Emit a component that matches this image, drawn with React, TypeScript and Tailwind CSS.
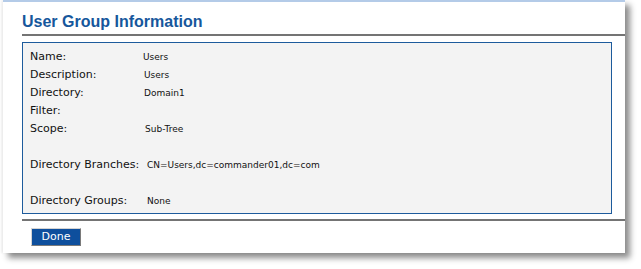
const rows: { label: string; value: string; mt: string; vx: string }[] = [
  { label: 'Name:', value: 'Users', mt: 'mt-0', vx: 'pl-0' },
  { label: 'Description:', value: 'Users', mt: 'mt-0', vx: 'pl-[1px]' },
  { label: 'Directory:', value: 'Domain1', mt: 'mt-0', vx: 'pl-[1px]' },
  { label: 'Filter:', value: '', mt: 'mt-0', vx: 'pl-0' },
  { label: 'Scope:', value: 'Sub-Tree', mt: 'mt-0', vx: 'pl-[2px]' },
  { label: 'Directory Branches:', value: 'CN=Users,dc=commander01,dc=com', mt: 'mt-[18px]', vx: 'pl-[4px]' },
  { label: 'Directory Groups:', value: 'None', mt: 'mt-[18px]', vx: 'pl-[4px]' },
];

export default function App() {
  return (
    <div className="w-[641px] h-[269px] bg-white overflow-hidden">
      <div className="ml-[3px] w-[622px] h-[253px] bg-white border-t-2 border-[#b4cbe8] pl-[19px] shadow-[-2px_0_2px_rgba(0,0,0,0.06),5px_5px_6px_rgba(0,0,0,0.45)]">
        <h1 className="pt-[10px] text-[16px] leading-[20px] font-bold text-[#16579c] font-['Arial','Liberation_Sans',sans-serif]">
          User Group Information
        </h1>
        <div className="mt-[2px] h-[2px] bg-[#747474]" />
        <div className="mt-[6px] w-[590px] h-[172px] border border-[#1d5b9c] bg-[#f3f3f3] pl-[7px] pt-[5px] font-['Verdana','DejaVu_Sans',sans-serif] text-[#111]">
          {rows.map((r) => (
            <div key={r.label} className={`flex items-baseline h-[18px] leading-[18px] ${r.mt}`}>
              <span className="w-[113px] shrink-0 text-[11px]">{r.label}</span>
              <span className={`text-[9px] ${r.vx}`}>{r.value}</span>
            </div>
          ))}
        </div>
        <div className="mt-[5px] h-[2px] bg-[#747474]" />
        <button className="mt-[7px] ml-[9px] w-[50px] h-[18px] bg-[#0e4f9d] border border-t-[#d4d4d4] border-l-[#d4d4d4] border-r-[#7a7a7a] border-b-[#7a7a7a] text-white text-[11px] leading-[16px] font-['Verdana','DejaVu_Sans',sans-serif]">
          Done
        </button>
      </div>
    </div>
  );
}
